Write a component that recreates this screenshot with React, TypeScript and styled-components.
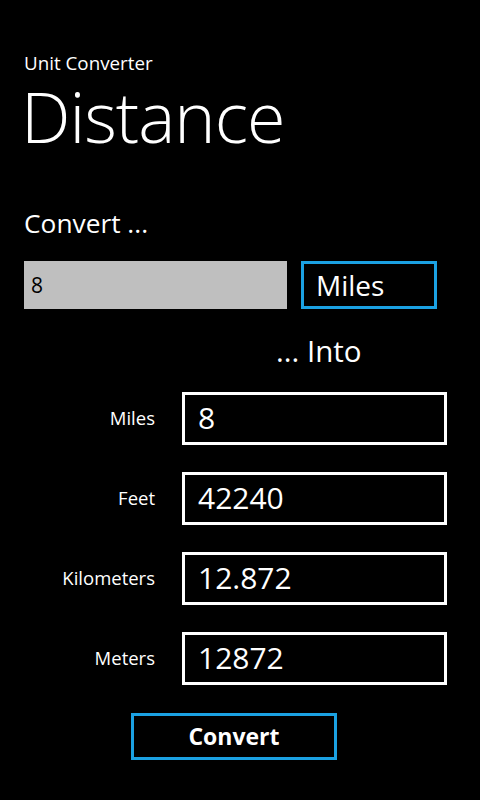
import React from "react";
import styled, { createGlobalStyle } from "styled-components";

const Global = createGlobalStyle`
  html, body { margin: 0; padding: 0; background: #000; }
  body { font-family: "Open Sans", "Noto Sans", sans-serif; color: #fff; }
  * { box-sizing: border-box; }
`;

const Page = styled.div`
  width: 480px;
  height: 800px;
  background: #000;
  padding: 52px 0 0 24px;
  display: flex;
  flex-direction: column;
`;

const AppName = styled.div`
  font-size: 18.8px;
  line-height: 22px;
  height: 22px;
`;

const Title = styled.div`
  font-size: 70px;
  font-weight: 300;
  line-height: 72px;
  height: 72px;
  margin-top: 6px;
  margin-left: -3px;
  letter-spacing: -1px;
`;

const Section = styled.div`
  font-size: 26.3px;
  line-height: 34px;
  margin-top: 54px;
`;

const InputRow = styled.div`
  display: flex;
  gap: 14px;
  margin-top: 21px;
`;

const GrayInput = styled.div`
  width: 263px;
  height: 48px;
  background: #bfbfbf;
  color: #000;
  font-size: 21px;
  display: flex;
  align-items: center;
  padding-left: 7px;
`;

const UnitButton = styled.div`
  width: 136px;
  height: 48px;
  border: 3px solid #1ba1e2;
  font-size: 28px;
  display: flex;
  align-items: center;
  padding-left: 12px;
`;

const Into = styled.div`
  font-size: 29.5px;
  line-height: 40px;
  margin-top: 22px;
  margin-left: 252px;
`;

const Rows = styled.div`
  display: grid;
  grid-template-columns: 131px 265px;
  column-gap: 27px;
  row-gap: 27px;
  margin-top: 21px;
`;

const Label = styled.div`
  font-size: 18.5px;
  text-align: right;
  align-self: center;
  padding-bottom: 2px;
`;

const ValueBox = styled.div`
  height: 53px;
  border: 3px solid #fff;
  font-size: 30px;
  display: flex;
  align-items: center;
  padding-left: 13px;
  padding-bottom: 3px;
`;

const ConvertButton = styled.div`
  width: 206px;
  height: 47px;
  border: 3px solid #1ba1e2;
  margin-top: 28px;
  margin-left: 107px;
  font-size: 23px;
  font-weight: 700;
  display: flex;
  align-items: center;
  justify-content: center;
  padding-bottom: 2px;
`;

const rows = [
  { label: "Miles", value: "8" },
  { label: "Feet", value: "42240" },
  { label: "Kilometers", value: "12.872" },
  { label: "Meters", value: "12872" },
];

export default function App() {
  return (
    <>
      <Global />
      <Page>
        <AppName>Unit Converter</AppName>
        <Title>Distance</Title>
        <Section>Convert ...</Section>
        <InputRow>
          <GrayInput>8</GrayInput>
          <UnitButton>Miles</UnitButton>
        </InputRow>
        <Into>... Into</Into>
        <Rows>
          {rows.map((r) => (
            <React.Fragment key={r.label}>
              <Label>{r.label}</Label>
              <ValueBox>{r.value}</ValueBox>
            </React.Fragment>
          ))}
        </Rows>
        <ConvertButton>Convert</ConvertButton>
      </Page>
    </>
  );
}
